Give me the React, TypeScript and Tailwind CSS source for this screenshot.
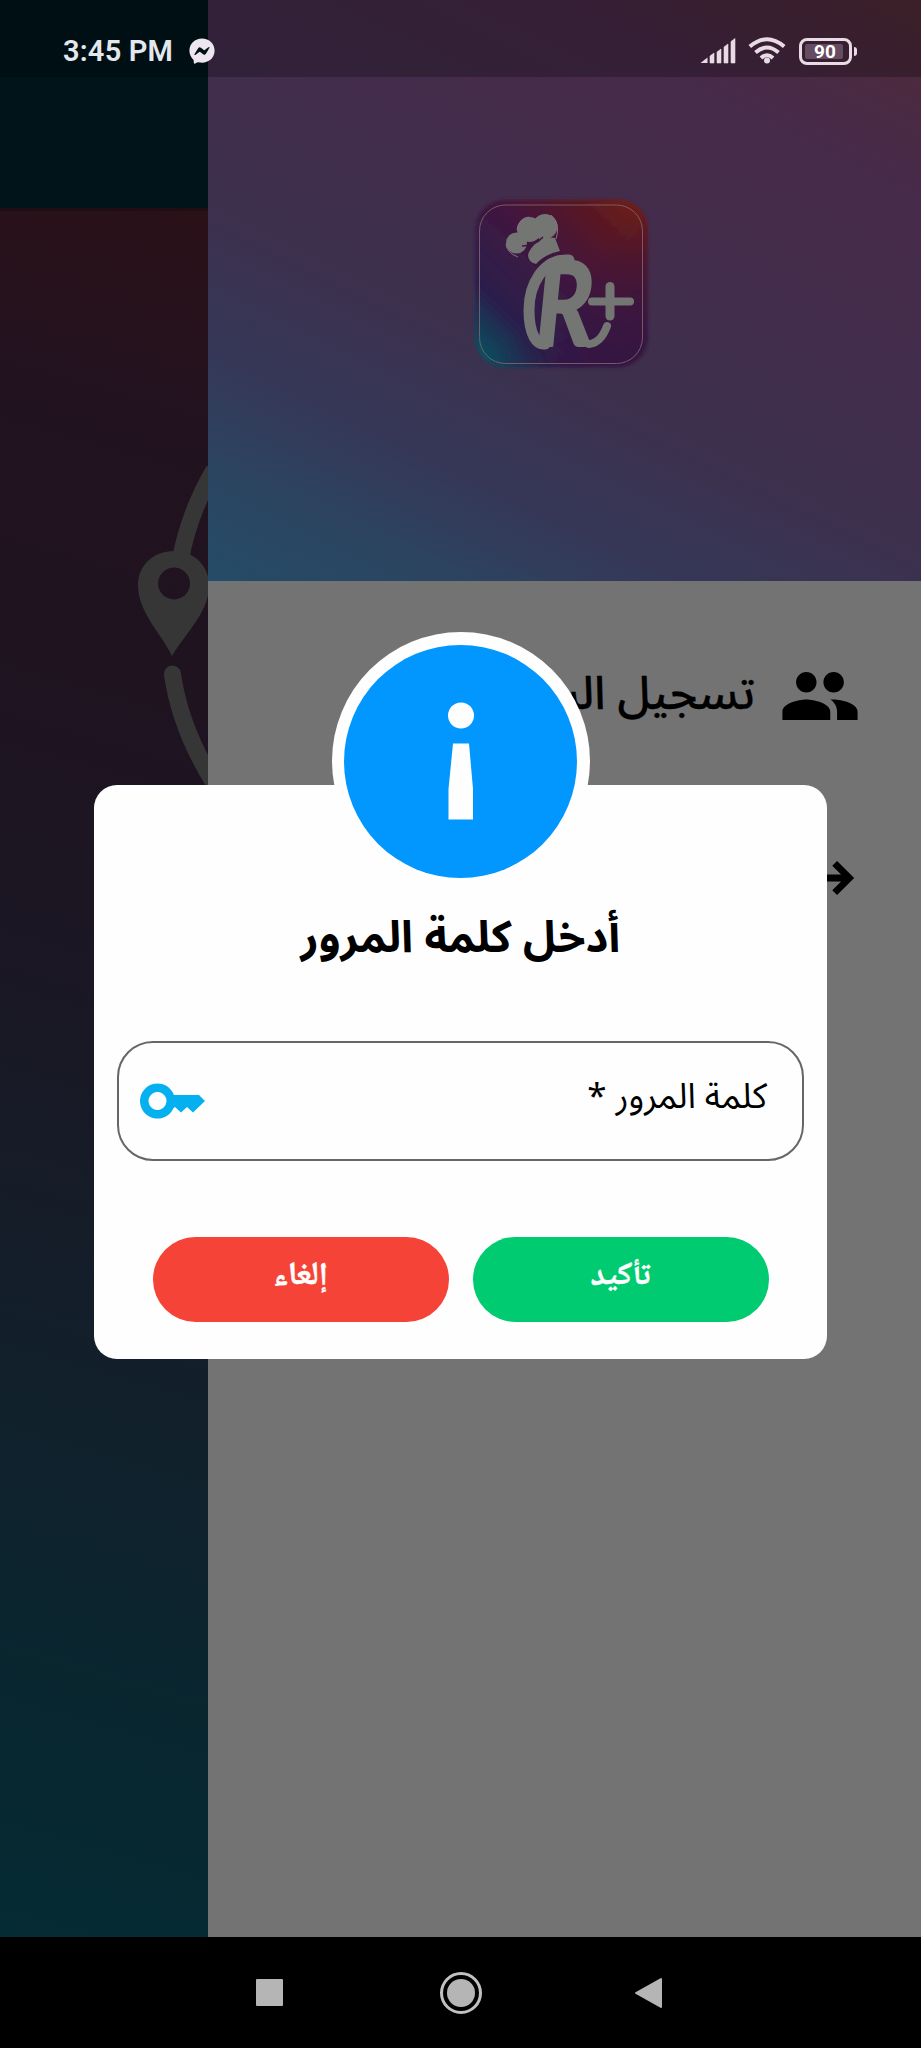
import React from "react";
import { MdPeople, MdLogout } from "react-icons/md";
import { FaFacebookMessenger } from "react-icons/fa";

function StatusBar() {
  return (
    <div className="absolute inset-x-0 top-0 flex h-[77px] items-center bg-black/25 pl-[63px] pr-[64px] pt-[25px]">
      <span className="w-[110px] whitespace-nowrap font-['Roboto',sans-serif] text-[29px] font-semibold leading-[50px] tracking-[0.2px] text-[#e4e8ee]">
        3:45 PM
      </span>
      <FaFacebookMessenger className="ml-4 size-[26px] text-[#ece6f0]" />
      <div className="ml-auto flex items-center">
        <svg width="36" height="28" viewBox="0 0 36 28" fill="#e8dbe6">
          <path d="M0.500 26 L7.500 20.500 V26 Z" />
          <path d="M10 19 L14 16 V26 H10 Z M17 15 L21 12 V26 H17 Z M24 10 L28 7 V26 H24 Z M31 4.500 L35 1.500 V26 H31 Z" stroke="#e8dbe6" strokeWidth="0.600" />
        </svg>
        <svg className="ml-3" width="38" height="28" viewBox="0 0 38 28" fill="none" stroke="#e8dbe6" strokeWidth="4">
          <path d="M1.800 9.500 Q19 -5 36.200 9.500 M7.500 15.500 Q19 5.500 30.500 15.500 M13 21 Q19 15.500 25 21" />
          <circle cx="19" cy="23.500" r="3" fill="#e8dbe6" stroke="none" />
        </svg>
        <div className="ml-[13px] flex h-[27px] w-[53px] items-center rounded-[8px] border-[3px] border-[#e8dbe6] p-[3px]">
          <div className="flex h-full w-[38px] items-center justify-center rounded-[2px] bg-[#654c60] pl-[2px] font-['Roboto',sans-serif] text-[19px] font-bold leading-none text-white">
            90
          </div>
        </div>
        <div className="ml-[2px] h-[9px] w-[3px] rounded-r-[3px] bg-[#e8dbe6]" />
      </div>
    </div>
  );
}

function Logo() {
  return (
    <svg width="180" height="176" viewBox="470 194 180 176" direction="ltr" className="overflow-visible">
      <defs>
        <linearGradient id="tile" x1="0" y1="1" x2="1" y2="0">
          <stop offset="0.040" stopColor="#075361" />
          <stop offset="0.260" stopColor="#2b1d4c" />
          <stop offset="0.550" stopColor="#40183f" />
          <stop offset="0.780" stopColor="#571925" />
          <stop offset="0.960" stopColor="#701a17" />
        </linearGradient>
        <linearGradient id="shade" x1="0.500" y1="0.500" x2="1" y2="1">
          <stop offset="0" stopColor="#351541" stopOpacity="0" />
          <stop offset="0.800" stopColor="#351541" stopOpacity="0.900" />
        </linearGradient>
        <filter id="soft" x="-10%" y="-10%" width="120%" height="120%">
          <feGaussianBlur stdDeviation="1.500" />
        </filter>
      </defs>
      <g filter="url(#soft)">
        <rect x="476" y="199.500" width="173" height="168" rx="30" fill="url(#tile)" />
        <rect x="476" y="199.500" width="173" height="168" rx="30" fill="url(#shade)" />
      </g>
      <rect x="480.500" y="205" width="163" height="158.500" rx="26" fill="none" stroke="#806068" strokeWidth="0.900" />
      <g fill="#747673">
        <circle cx="517.500" cy="243" r="10.500" />
        <circle cx="530.500" cy="229.500" r="12.500" />
        <circle cx="546" cy="226.500" r="12.500" />
        <path d="M540 236 L556 238 L561 251 Q546 254 537 264 Q529 262 529 255 Q530 249 540 240 Z" />
      </g>
      <g fill="none" stroke="#8f6f86" strokeWidth="1">
        <path d="M507 244 Q508 253 519 257 M518 230 Q520 218 530 217 M552 215 Q562 224 557 239" />
      </g>
      <path d="M523 246 Q536 246 544 237" fill="none" stroke="#3d183c" strokeWidth="1.600" />
      <text
        transform="translate(537 345) scale(0.820 1)"
        className="font-['Lato',sans-serif] italic"
        fontWeight="700"
        fontSize="117"
        fill="#747673"
        stroke="#747673"
        strokeWidth="3"
        strokeLinejoin="round"
      >
        R
      </text>
      <g fill="none" stroke="#747673" strokeWidth="11" strokeLinecap="round">
        <path d="M570 260 C544 258 530 285 530 310 C530 335 538 345 546 344" />
        <path d="M590 344 Q602 343 608 326" strokeWidth="8" />
        <path d="M593 301.500 H631" strokeWidth="8" />
        <path d="M611 286.500 V316" strokeWidth="9" />
      </g>
    </svg>
  );
}

function HomeStrip() {
  return (
    <section className="flex w-[208px] flex-none flex-col">
      <div className="h-[208px] bg-[#00141a]" />
      <div className="flex-1 bg-[linear-gradient(16deg,#052b34_0%,#08262f_14%,#11212c_30%,#151c28_42%,#1b1724_55%,#1f1320_72%,#22121f_88%,#2b1118_100%)]">
        <div className="h-[3px] bg-black/20" />
        <svg className="mt-[239px]" width="208" height="360" viewBox="0 450 208 360">
          <g fill="none" stroke="#363636" strokeWidth="17">
            <path d="M180 562 Q188 515 214 470" />
            <path d="M172.500 674 Q180 728 214 783" strokeLinecap="round" />
          </g>
          <path
            fillRule="evenodd"
            fill="#363636"
            d="M172 656 C160 632 138 612 138 585 C138 565 154 551 174 551 C193 551 209 565 209 585 C209 612 188 630 172 656 Z M174 567.500 a16 16 0 1 0 0.100 0 Z"
          />
        </svg>
      </div>
    </section>
  );
}

function Drawer() {
  return (
    <section dir="rtl" className="flex flex-1 flex-col bg-[#737373]">
      <header className="flex h-[581px] items-start justify-center bg-[linear-gradient(26deg,#244c68_0%,#2c4460_13%,#363757_25%,#3d304d_42%,#432d4c_60%,#472a49_80%,#4b2a40_90%,#502b36_100%)] pr-[11px] pt-[194px]">
        <Logo />
      </header>
      <div className="flex h-[230px] items-center gap-6 pr-[60px]">
        <MdPeople className="size-[82px] text-black" />
        <span className="pb-1 font-['Noto_Sans_Arabic','DejaVu_Sans',sans-serif] text-[46px] font-medium text-black [-webkit-text-stroke:0.3px_black]">
          تسجيل السـ
        </span>
      </div>
      <div className="flex h-[134px] items-center pr-[60px]">
        <MdLogout className="size-[82px] text-black" />
      </div>
    </section>
  );
}

function PasswordDialog() {
  return (
    <div dir="rtl" className="absolute left-[94px] top-[785px] flex h-[574px] w-[733px] flex-col items-center rounded-[23px] bg-[#fefefe] px-[23px]">
      <div className="mt-[-153px] flex size-[258px] flex-none items-center justify-center rounded-full bg-[#fefefe]">
        <div className="flex size-[233px] items-center justify-center rounded-full bg-[#0197ff]">
          <svg width="26" height="118" viewBox="0 0 26 118" fill="#fefefe">
            <circle cx="13" cy="13.500" r="13" />
            <path d="M5 41.500 H21 L25 87 V117.500 H0.500 V87 Z" />
          </svg>
        </div>
      </div>
      <h1 className="mt-[3px] h-[90px] whitespace-nowrap font-['Noto_Sans_Arabic','DejaVu_Sans',sans-serif] text-[44px] font-bold leading-[90px] text-black">
        أدخل كلمة المرور
      </h1>
      <div className="mt-[58px] flex h-[120px] w-full flex-none items-center justify-between rounded-[36px] border-[2.500px] border-[#666] pr-[35px] pl-[21px]">
        <span className="pb-2 font-['Noto_Sans_Arabic','DejaVu_Sans',sans-serif] text-[35px] text-black">
          كلمة المرور *
        </span>
        <svg width="65" height="36" viewBox="0 0 65 36" fill="#04b0f0">
          <path fillRule="evenodd" d="M17.500 0.500 a17.500 17.500 0 1 0 0.010 0 Z M17.500 9 a9 9 0 1 1 -0.010 0 Z" />
          <path d="M32 12 H59 L65 18 L53 29.500 L47 24 L41 29.500 L35 24 L32 26 Z" />
        </svg>
      </div>
      <div className="mt-[76px] flex gap-6 font-['Noto_Naskh_Arabic_UI','Noto_Naskh_Arabic','DejaVu_Sans',sans-serif] text-[32.500px] font-bold text-[#fefefe] [-webkit-text-stroke:0.4px_#fefefe]">
        <button className="h-[85px] w-[296px] rounded-full bg-[#00cb70] pb-1">تأكيد</button>
        <button className="h-[85px] w-[296px] rounded-full bg-[#f54437] pb-1">إلغاء</button>
      </div>
    </div>
  );
}

function NavBar() {
  return (
    <nav className="flex h-[111px] flex-none items-center bg-black pl-[256px]">
      <div className="size-[27px] rounded-[1px] bg-[#b5b5b5]" />
      <div className="ml-[157px] flex size-[42px] items-center justify-center rounded-full border-[3px] border-[#c4c0c0]">
        <div className="size-[28px] rounded-full bg-[#b5b5b5]" />
      </div>
      <svg className="ml-[152px]" width="28" height="32" viewBox="0 0 28 32">
        <path d="M27 2 V30 L2 16 Z" fill="#b5b5b5" stroke="#b5b5b5" strokeWidth="2" strokeLinejoin="round" />
      </svg>
    </nav>
  );
}

export default function App() {
  return (
    <main className="relative flex h-[2048px] w-[921px] flex-col overflow-hidden">
      <div className="flex flex-1">
        <HomeStrip />
        <Drawer />
      </div>
      <NavBar />
      <StatusBar />
      <PasswordDialog />
    </main>
  );
}
